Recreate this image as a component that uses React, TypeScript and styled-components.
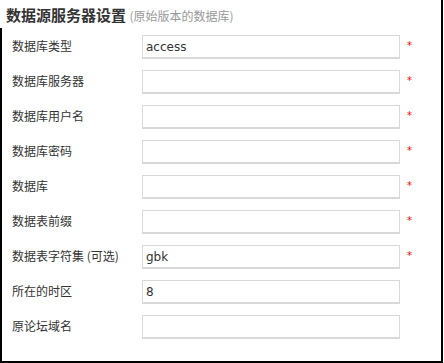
import styled, { createGlobalStyle } from "styled-components";

const GlobalStyle = createGlobalStyle`
  html, body {
    margin: 0;
    padding: 0;
    background: #fff;
  }
`;

const fields = [
  { label: "数据库类型", value: "access", required: true },
  { label: "数据库服务器", value: "", required: true },
  { label: "数据库用户名", value: "", required: true },
  { label: "数据库密码", value: "", required: true },
  { label: "数据库", value: "", required: true },
  { label: "数据表前缀", value: "", required: true },
  { label: "数据表字符集", note: "(可选)", value: "gbk", required: true },
  { label: "所在的时区", value: "8", required: false },
  { label: "原论坛域名", value: "", required: false },
];

const App = () => {
  return (
    <>
      <GlobalStyle />
      <Frame>
        <Heading>
          数据源服务器设置 <Sub>(原始版本的数据库)</Sub>
        </Heading>
        <Body>
          {fields.map((f) => (
            <Row key={f.label}>
              <Label>
                {f.label}
                {f.note && <span> {f.note}</span>}
              </Label>
              <Input type="text" defaultValue={f.value} />
              <Star>{f.required ? "*" : ""}</Star>
            </Row>
          ))}
        </Body>
      </Frame>
    </>
  );
};

const Frame = styled.div`
  box-sizing: border-box;
  width: 443px;
  height: 363px;
  border-right: 2px solid #000;
  border-bottom: 2px solid #000;
  display: flex;
  flex-direction: column;
`;

const Heading = styled.div`
  height: 28px;
  padding: 5px 0 0 6px;
  box-sizing: border-box;
  font-family: "Noto Sans CJK SC", "Noto Sans", sans-serif;
  font-size: 15px;
  font-weight: bold;
  line-height: 20px;
  color: #333;
  white-space: nowrap;
`;

const Sub = styled.span`
  font-size: 12px;
  font-weight: normal;
  color: #999;
`;

const Body = styled.div`
  flex: 1;
  border-left: 2px solid #000;
  padding: 7px 0 0 10px;
  display: grid;
  grid-template-columns: 130px 258px 1fr;
  grid-auto-rows: 24px;
  row-gap: 11px;
  align-content: start;
`;

const Row = styled.div`
  display: contents;
`;

const Label = styled.div`
  align-self: center;
  margin-top: -2px;
  font-family: "Noto Sans CJK SC", "Noto Sans", sans-serif;
  font-size: 12px;
  line-height: 16px;
  color: #333;
  white-space: nowrap;
`;

const Input = styled.input`
  box-sizing: border-box;
  width: 258px;
  height: 24px;
  margin: 0;
  padding: 1px 3px 0;
  border: 1px solid #d9d9d9;
  border-bottom-width: 2px;
  outline: none;
  background: #fff;
  font-family: "DejaVu Sans", Verdana, sans-serif;
  font-size: 12px;
  color: #333;
`;

const Star = styled.span`
  padding: 6px 0 0 7px;
  font-family: "DejaVu Sans", Verdana, sans-serif;
  font-size: 10px;
  line-height: 10px;
  color: #f00;
`;

export default App;
